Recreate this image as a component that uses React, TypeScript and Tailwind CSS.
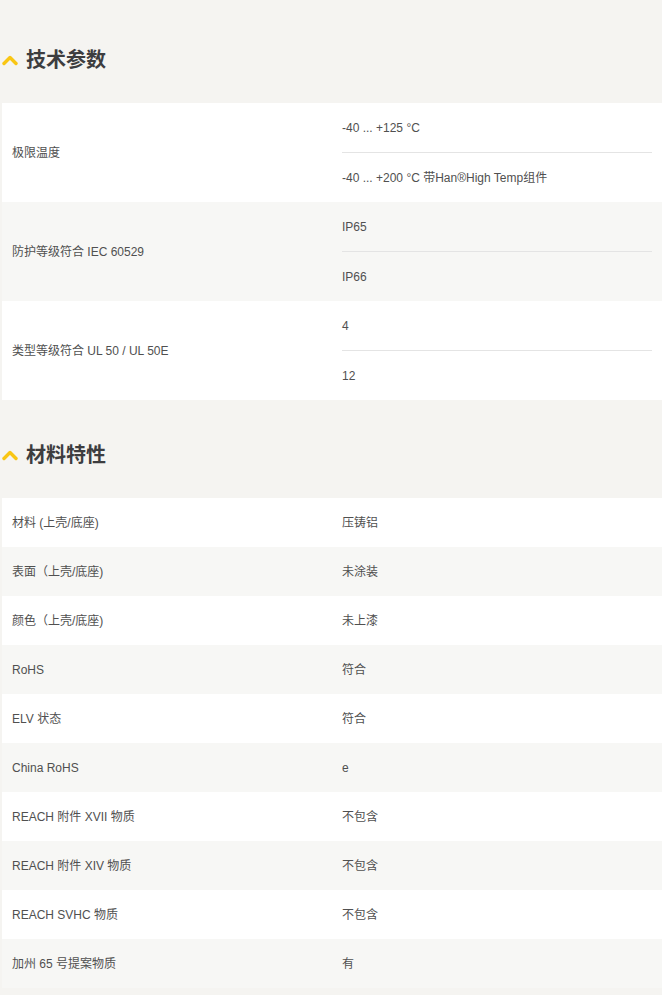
import React from "react";

const font = { fontFamily: '"Liberation Sans", "Noto Sans CJK SC", sans-serif' };

type Row = { label: string; values: string[] };

const tech: Row[] = [
  { label: "极限温度", values: ["-40 ... +125 °C", "-40 ... +200 °C 带Han®High Temp组件"] },
  { label: "防护等级符合 IEC 60529", values: ["IP65", "IP66"] },
  { label: "类型等级符合 UL 50 / UL 50E", values: ["4", "12"] },
];

const material: Row[] = [
  { label: "材料 (上壳/底座)", values: ["压铸铝"] },
  { label: "表面（上壳/底座)", values: ["未涂装"] },
  { label: "颜色（上壳/底座)", values: ["未上漆"] },
  { label: "RoHS", values: ["符合"] },
  { label: "ELV 状态", values: ["符合"] },
  { label: "China RoHS", values: ["e"] },
  { label: "REACH 附件 XVII 物质", values: ["不包含"] },
  { label: "REACH 附件 XIV 物质", values: ["不包含"] },
  { label: "REACH SVHC 物质", values: ["不包含"] },
  { label: "加州 65 号提案物质", values: ["有"] },
];

function Chevron() {
  return (
    <svg width="16" height="12" viewBox="0 0 16 12" className="shrink-0">
      <path d="M2 9.5 L8 3.5 L14 9.5" fill="none" stroke="#f9c614" strokeWidth="3.4" strokeLinecap="round" strokeLinejoin="round" />
    </svg>
  );
}

function Header({ title, top }: { title: string; top: string }) {
  return (
    <div className={`flex items-center gap-[8px] pl-[2px] pb-[29px] ${top}`}>
      <Chevron />
      <h2 className="text-[20px] leading-[28px] font-bold text-[#3d3d3f]">{title}</h2>
    </div>
  );
}

function Table({ rows }: { rows: Row[] }) {
  return (
    <div className="ml-[2px]">
      {rows.map((r, i) => (
        <div
          key={i}
          className={`grid grid-cols-[340px_1fr] text-[12px] text-[#505050] ${i % 2 === 0 ? "bg-white" : "bg-[#f7f7f5]"}`}
        >
          <div className="flex items-center pl-[10px]">{r.label}</div>
          <div className="pr-[10px]">
            {r.values.map((v, j) => (
              <div
                key={j}
                className={`flex items-center h-[49px] ${j > 0 ? "border-t border-[#e4e4e4] h-[50px]" : ""}`}
              >
                {v}
              </div>
            ))}
          </div>
        </div>
      ))}
    </div>
  );
}

export default function App() {
  return (
    <div className="min-h-[995px] w-[662px] bg-[#f5f4f1] pb-[7px]" style={font}>
      <Header title="技术参数" top="pt-[46px]" />
      <Table rows={tech} />
      <Header title="材料特性" top="pt-[41px]" />
      <Table rows={material} />
    </div>
  );
}
